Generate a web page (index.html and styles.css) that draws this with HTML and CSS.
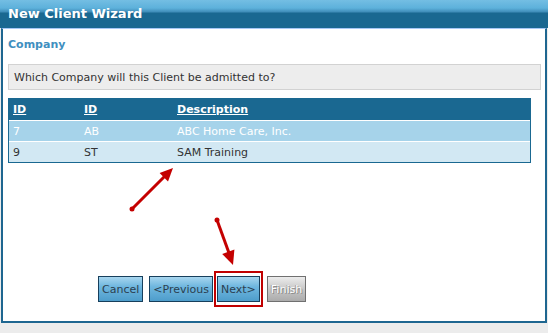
FILE: index.html
```html
<!DOCTYPE html>
<html lang="en">
<head>
    <meta charset="UTF-8">
    <title>New Client Wizard</title>
    <link rel="stylesheet" href="styles.css">
</head>
<body>
    <div class="titlebar">New Client Wizard</div>

    <div class="panel">
        <h3 class="section">Company</h3>
        <div class="prompt">Which Company will this Client be admitted to?</div>

        <table class="grid">
            <thead>
                <tr><th class="col-id">ID</th><th class="col-code">ID</th><th>Description</th></tr>
            </thead>
            <tbody>
                <tr class="selected"><td>7</td><td>AB</td><td>ABC Home Care, Inc.</td></tr>
                <tr><td>9</td><td>ST</td><td>SAM Training</td></tr>
            </tbody>
        </table>

        <div class="buttons">
            <button class="wiz-button">Cancel</button>
            <button class="wiz-button">&lt;Previous</button>
            <span class="highlight"><button class="wiz-button">Next&gt;</button></span>
            <button class="wiz-button disabled" disabled>Finish</button>
        </div>
    </div>

    <!-- annotation arrows -->
    <svg class="arrows" width="548" height="333" viewBox="0 0 548 333">
        <g fill="#c40000" stroke="#c40000">
            <line x1="132" y1="209" x2="166" y2="175" stroke-width="3"/>
            <circle cx="132" cy="209" r="2.5" stroke="none"/>
            <polygon points="173,168 168,181.4 159.6,173" stroke="none"/>

            <line x1="217" y1="220" x2="229" y2="253" stroke-width="3"/>
            <circle cx="217" cy="220" r="2.5" stroke="none"/>
            <polygon points="233,265 234.4,249.6 222.2,254" stroke="none"/>
        </g>
    </svg>
</body>
</html>
```

FILE: styles.css
```css
* {
    margin: 0;
    padding: 0;
    box-sizing: border-box;
}

body {
    width: 548px;
    height: 333px;
    background: #ececec;
    font-family: "DejaVu Sans", Verdana, sans-serif;
    font-size: 11px;
    color: #333;
    position: relative;
    overflow: hidden;
}

.titlebar {
    height: 28px;
    padding: 6px 8px 0;
    background: linear-gradient(#74bee3 0, #5db1db 8px, #3f8cb8 12px, #1a6891 13px, #1a6891 28px);
    color: #fff;
    font-size: 13px;
    font-weight: bold;
}

.panel {
    margin-left: 1px;
    width: 546px;
    height: 295px;
    background: #fff;
    border: 2px solid #1e6690;
    border-top: 1px solid #a6c8f6;
    padding: 9px 4px 0 5px;
}

.section {
    font-size: 11px;
    font-weight: bold;
    color: #3f8fc0;
    height: 26px;
}

.prompt {
    height: 26px;
    padding: 6px 5px 0;
    background: #ededed;
    border: 1px solid #d2d2d2;
    color: #333;
}

.grid {
    margin-top: 8px;
    width: 523px;
    border: 1px solid #1a6891;
    border-spacing: 0;
}

.grid th {
    height: 21px;
    padding-left: 4px;
    background: #1a6891;
    color: #fff;
    font-weight: bold;
    text-align: left;
    text-decoration: underline;
}

.grid .col-id {
    width: 71px;
}

.grid .col-code {
    width: 93px;
}

.grid td {
    height: 21px;
    padding-left: 4px;
    border-top: 1px solid #fff;
    background: #d2e8f3;
    color: #333;
}

.grid tr.selected td {
    background: #a6d3ea;
    color: #fff;
}

.buttons {
    display: flex;
    align-items: center;
    margin-top: 113px;
    padding-left: 90px;
}

.wiz-button {
    height: 26px;
    padding: 0 3px;
    margin-right: 6px;
    border: 1px solid #173f5c;
    background: linear-gradient(#a8d6ef 0, #6fb7df 40%, #4e9dcb 100%);
    color: #2b3f50;
    font-family: inherit;
    font-size: 11px;
}

.highlight {
    position: relative;
    display: inline-flex;
    margin-left: -2px;
    margin-right: 7px;
}

.highlight .wiz-button {
    margin-right: 0;
}

.highlight::after {
    content: "";
    position: absolute;
    top: -5px;
    bottom: -5px;
    left: -3px;
    right: -3px;
    border: 2px solid #c00000;
}

.wiz-button.disabled {
    border-color: #707070;
    background: linear-gradient(#ececec 0, #c8c8c8 50%, #ababab 100%);
    color: #fff;
    text-shadow: 1px 1px 0 #8c8c8c, -1px 0 0 #a0a0a0;
}

.arrows {
    position: absolute;
    left: 0;
    top: 0;
    pointer-events: none;
}
```
